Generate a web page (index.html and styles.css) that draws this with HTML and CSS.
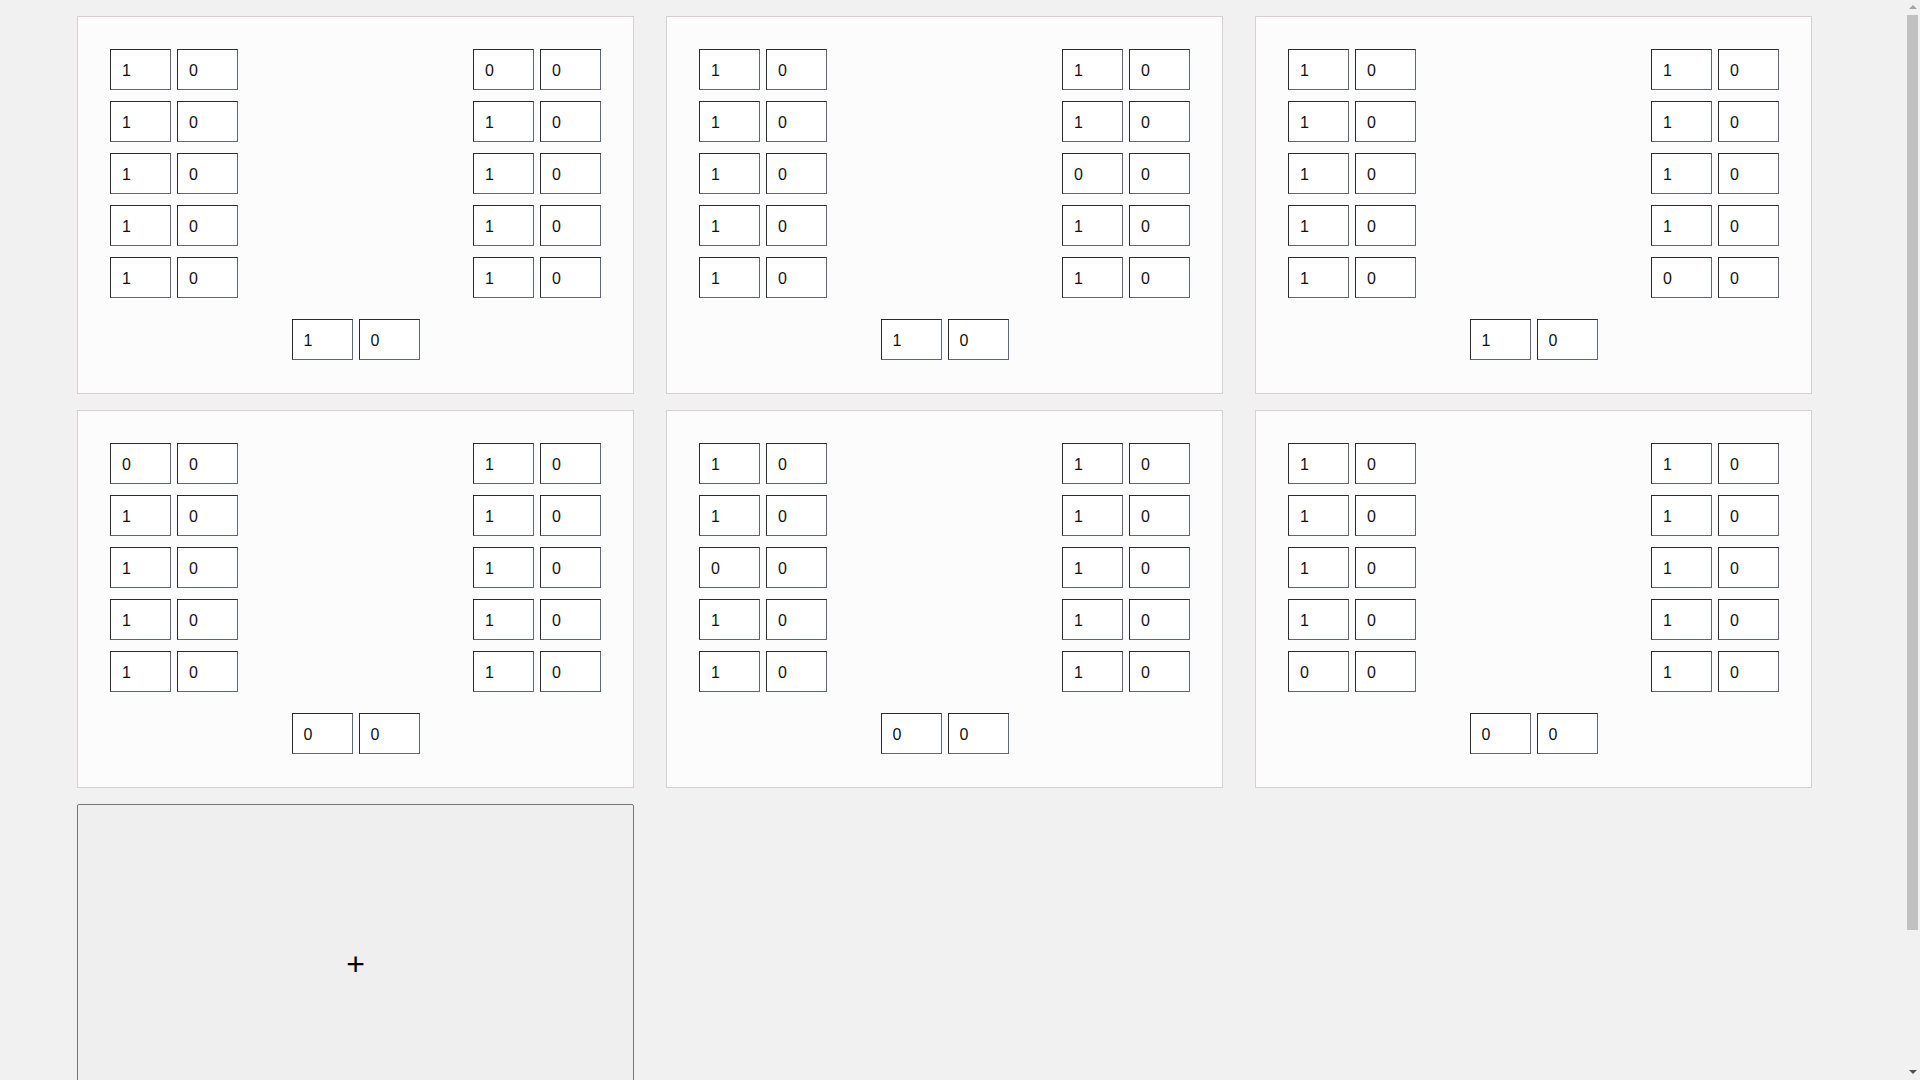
FILE: index.html
```html
<!DOCTYPE html>
<html lang="en">
<head>
<meta charset="utf-8">
<title>Boards</title>
<link rel="stylesheet" href="styles.css">
</head>
<body>
<main class="board">
  <section class="card">
    <div class="sides">
      <div class="col">
        <div class="pair"><input class="cell" value="1"><input class="cell" value="0"></div>
        <div class="pair"><input class="cell" value="1"><input class="cell" value="0"></div>
        <div class="pair"><input class="cell" value="1"><input class="cell" value="0"></div>
        <div class="pair"><input class="cell" value="1"><input class="cell" value="0"></div>
        <div class="pair"><input class="cell" value="1"><input class="cell" value="0"></div>
      </div>
      <div class="col">
        <div class="pair"><input class="cell" value="0"><input class="cell" value="0"></div>
        <div class="pair"><input class="cell" value="1"><input class="cell" value="0"></div>
        <div class="pair"><input class="cell" value="1"><input class="cell" value="0"></div>
        <div class="pair"><input class="cell" value="1"><input class="cell" value="0"></div>
        <div class="pair"><input class="cell" value="1"><input class="cell" value="0"></div>
      </div>
    </div>
    <div class="pair total"><input class="cell" value="1"><input class="cell" value="0"></div>
  </section>

  <section class="card">
    <div class="sides">
      <div class="col">
        <div class="pair"><input class="cell" value="1"><input class="cell" value="0"></div>
        <div class="pair"><input class="cell" value="1"><input class="cell" value="0"></div>
        <div class="pair"><input class="cell" value="1"><input class="cell" value="0"></div>
        <div class="pair"><input class="cell" value="1"><input class="cell" value="0"></div>
        <div class="pair"><input class="cell" value="1"><input class="cell" value="0"></div>
      </div>
      <div class="col">
        <div class="pair"><input class="cell" value="1"><input class="cell" value="0"></div>
        <div class="pair"><input class="cell" value="1"><input class="cell" value="0"></div>
        <div class="pair"><input class="cell" value="0"><input class="cell" value="0"></div>
        <div class="pair"><input class="cell" value="1"><input class="cell" value="0"></div>
        <div class="pair"><input class="cell" value="1"><input class="cell" value="0"></div>
      </div>
    </div>
    <div class="pair total"><input class="cell" value="1"><input class="cell" value="0"></div>
  </section>

  <section class="card">
    <div class="sides">
      <div class="col">
        <div class="pair"><input class="cell" value="1"><input class="cell" value="0"></div>
        <div class="pair"><input class="cell" value="1"><input class="cell" value="0"></div>
        <div class="pair"><input class="cell" value="1"><input class="cell" value="0"></div>
        <div class="pair"><input class="cell" value="1"><input class="cell" value="0"></div>
        <div class="pair"><input class="cell" value="1"><input class="cell" value="0"></div>
      </div>
      <div class="col">
        <div class="pair"><input class="cell" value="1"><input class="cell" value="0"></div>
        <div class="pair"><input class="cell" value="1"><input class="cell" value="0"></div>
        <div class="pair"><input class="cell" value="1"><input class="cell" value="0"></div>
        <div class="pair"><input class="cell" value="1"><input class="cell" value="0"></div>
        <div class="pair"><input class="cell" value="0"><input class="cell" value="0"></div>
      </div>
    </div>
    <div class="pair total"><input class="cell" value="1"><input class="cell" value="0"></div>
  </section>

  <section class="card">
    <div class="sides">
      <div class="col">
        <div class="pair"><input class="cell" value="0"><input class="cell" value="0"></div>
        <div class="pair"><input class="cell" value="1"><input class="cell" value="0"></div>
        <div class="pair"><input class="cell" value="1"><input class="cell" value="0"></div>
        <div class="pair"><input class="cell" value="1"><input class="cell" value="0"></div>
        <div class="pair"><input class="cell" value="1"><input class="cell" value="0"></div>
      </div>
      <div class="col">
        <div class="pair"><input class="cell" value="1"><input class="cell" value="0"></div>
        <div class="pair"><input class="cell" value="1"><input class="cell" value="0"></div>
        <div class="pair"><input class="cell" value="1"><input class="cell" value="0"></div>
        <div class="pair"><input class="cell" value="1"><input class="cell" value="0"></div>
        <div class="pair"><input class="cell" value="1"><input class="cell" value="0"></div>
      </div>
    </div>
    <div class="pair total"><input class="cell" value="0"><input class="cell" value="0"></div>
  </section>

  <section class="card">
    <div class="sides">
      <div class="col">
        <div class="pair"><input class="cell" value="1"><input class="cell" value="0"></div>
        <div class="pair"><input class="cell" value="1"><input class="cell" value="0"></div>
        <div class="pair"><input class="cell" value="0"><input class="cell" value="0"></div>
        <div class="pair"><input class="cell" value="1"><input class="cell" value="0"></div>
        <div class="pair"><input class="cell" value="1"><input class="cell" value="0"></div>
      </div>
      <div class="col">
        <div class="pair"><input class="cell" value="1"><input class="cell" value="0"></div>
        <div class="pair"><input class="cell" value="1"><input class="cell" value="0"></div>
        <div class="pair"><input class="cell" value="1"><input class="cell" value="0"></div>
        <div class="pair"><input class="cell" value="1"><input class="cell" value="0"></div>
        <div class="pair"><input class="cell" value="1"><input class="cell" value="0"></div>
      </div>
    </div>
    <div class="pair total"><input class="cell" value="0"><input class="cell" value="0"></div>
  </section>

  <section class="card">
    <div class="sides">
      <div class="col">
        <div class="pair"><input class="cell" value="1"><input class="cell" value="0"></div>
        <div class="pair"><input class="cell" value="1"><input class="cell" value="0"></div>
        <div class="pair"><input class="cell" value="1"><input class="cell" value="0"></div>
        <div class="pair"><input class="cell" value="1"><input class="cell" value="0"></div>
        <div class="pair"><input class="cell" value="0"><input class="cell" value="0"></div>
      </div>
      <div class="col">
        <div class="pair"><input class="cell" value="1"><input class="cell" value="0"></div>
        <div class="pair"><input class="cell" value="1"><input class="cell" value="0"></div>
        <div class="pair"><input class="cell" value="1"><input class="cell" value="0"></div>
        <div class="pair"><input class="cell" value="1"><input class="cell" value="0"></div>
        <div class="pair"><input class="cell" value="1"><input class="cell" value="0"></div>
      </div>
    </div>
    <div class="pair total"><input class="cell" value="0"><input class="cell" value="0"></div>
  </section>

  <button class="add" type="button">+</button>
</main>

<div class="scrollbar" aria-hidden="true">
  <span class="arrow arrow-up"></span>
  <span class="thumb"></span>
  <span class="arrow arrow-down"></span>
</div>
</body>
</html>
```

FILE: styles.css
```css
html, body {
  margin: 0;
  padding: 0;
  background: #f1f1f1;
}

body {
  font-family: "Liberation Sans", Arial, sans-serif;
}

.board {
  display: grid;
  grid-template-columns: repeat(3, 557px);
  column-gap: 32px;
  row-gap: 16px;
  align-items: start;
  padding: 16px 0 114px 77px;
}

.card {
  box-sizing: border-box;
  width: 557px;
  height: 378px;
  background: #fcfcfc;
  border: 1px solid #d9ced1;
  padding: 32px 32px 33px 32px;
  display: flex;
  flex-direction: column;
}

.sides {
  display: flex;
  justify-content: space-between;
}

.col {
  display: flex;
  flex-direction: column;
  gap: 11px;
}

.pair {
  display: flex;
  gap: 6px;
}

.total {
  align-self: center;
  margin-top: 21px;
}

.cell {
  box-sizing: border-box;
  width: 61px;
  height: 41px;
  margin: 0;
  padding: 2px 4px 0 11px;
  background: #ffffff;
  border-style: solid;
  border-width: 1px;
  border-color: #2b2b2b #5f6774 #5f6774 #2b2b2b;
  border-radius: 0;
  font-family: "Liberation Sans", Arial, sans-serif;
  font-size: 16px;
  color: #111111;
  outline: none;
}

.add {
  box-sizing: border-box;
  width: 557px;
  height: 321px;
  margin: 0;
  padding: 0;
  background: #efefef;
  border: 1px solid #767676;
  border-radius: 2px;
  font-family: "Liberation Sans", Arial, sans-serif;
  font-size: 32px;
  line-height: normal;
  color: #000000;
}

/* classic window scrollbar overlay */
.scrollbar {
  position: fixed;
  top: 0;
  right: 0;
  width: 15px;
  height: 100vh;
  background: #f1f1f1;
  display: flex;
  flex-direction: column;
  align-items: center;
}

.arrow {
  display: block;
  width: 0;
  height: 0;
  border-left: 4px solid transparent;
  border-right: 4px solid transparent;
  flex: none;
}

.arrow-up {
  margin-top: 5px;
  margin-bottom: 6px;
  border-bottom: 4px solid #a3a3a3;
}

.arrow-down {
  margin-top: auto;
  margin-bottom: 6px;
  border-top: 4px solid #505050;
}

.thumb {
  display: block;
  width: 11px;
  height: 915px;
  background: #c1c1c1;
  flex: none;
}
```
